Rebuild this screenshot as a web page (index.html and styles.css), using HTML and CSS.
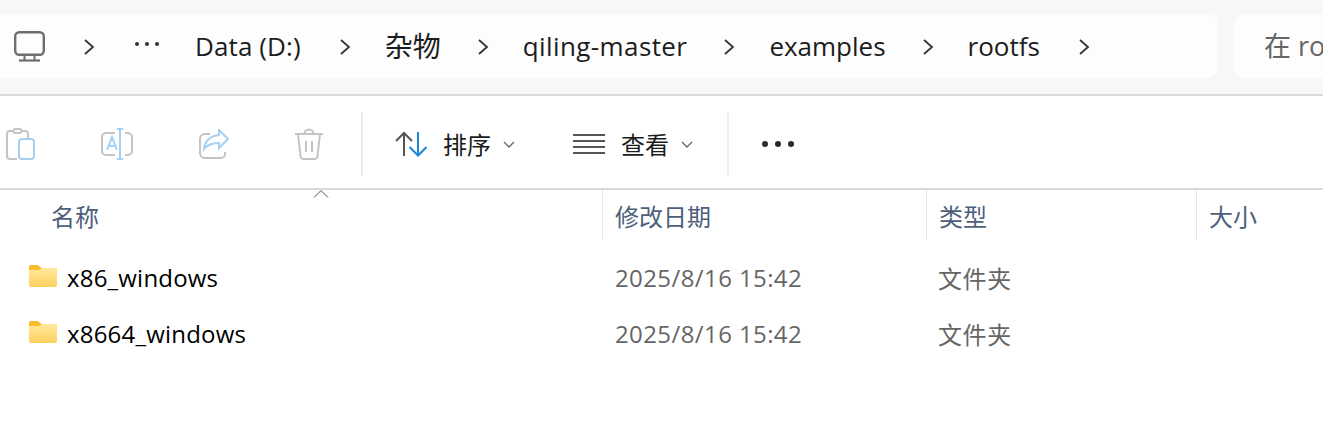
FILE: index.html
```html
<!DOCTYPE html>
<html lang="zh-CN">
<head>
    <meta charset="UTF-8">
    <meta name="viewport" content="width=device-width, initial-scale=1.0">
    <title>rootfs</title>
    <link rel="stylesheet" href="styles.css">
</head>
<body>
    <!-- Address bar -->
    <div class="address-row">
        <div class="address-box">
            <svg class="pc-icon" width="32" height="32" viewBox="0 0 32 32" fill="none" stroke="#6e6e6e" stroke-width="2.4">
                <rect x="1.2" y="1.2" width="28.6" height="22.6" rx="4"/>
                <path d="M10.5 24v5M20.5 24v5" stroke-width="2"/>
                <path d="M5 29.5h21" stroke-width="2.2"/>
            </svg>
            <svg class="crumb-chevron first" width="12" height="16" viewBox="0 0 12 16" fill="none" stroke="#333" stroke-width="1.8"><path d="M2 1l8 7-8 7"/></svg>
            <span class="crumb-dots"><i></i><i></i><i></i></span>
            <span class="crumb drive">Data (D:)</span>
            <svg class="crumb-chevron" width="12" height="16" viewBox="0 0 12 16" fill="none" stroke="#333" stroke-width="1.8"><path d="M2 1l8 7-8 7"/></svg>
            <span class="crumb cjk">杂物</span>
            <svg class="crumb-chevron" width="12" height="16" viewBox="0 0 12 16" fill="none" stroke="#333" stroke-width="1.8"><path d="M2 1l8 7-8 7"/></svg>
            <span class="crumb wide">qiling-master</span>
            <svg class="crumb-chevron" width="12" height="16" viewBox="0 0 12 16" fill="none" stroke="#333" stroke-width="1.8"><path d="M2 1l8 7-8 7"/></svg>
            <span class="crumb">examples</span>
            <svg class="crumb-chevron" width="12" height="16" viewBox="0 0 12 16" fill="none" stroke="#333" stroke-width="1.8"><path d="M2 1l8 7-8 7"/></svg>
            <span class="crumb last">rootfs</span>
            <svg class="crumb-chevron" width="12" height="16" viewBox="0 0 12 16" fill="none" stroke="#333" stroke-width="1.8"><path d="M2 1l8 7-8 7"/></svg>
        </div>
        <div class="search-box">在 ro</div>
    </div>

    <!-- Command bar -->
    <div class="toolbar">
        <svg class="tool-paste" width="30" height="32" viewBox="0 0 30 32" fill="none" stroke-width="2">
            <path d="M8 3H4a3 3 0 0 0-3 3v22a3 3 0 0 0 3 3h7M22 11V6a3 3 0 0 0-3-3h-4" stroke="#c4c4c4"/>
            <rect x="7.500" y="1" width="8" height="4" rx="2" stroke="#c4c4c4"/>
            <rect x="13" y="11" width="15" height="20" rx="3" stroke="#a6d0f2"/>
        </svg>
        <svg class="tool-rename" width="32" height="32" viewBox="0 0 32 32" fill="none" stroke-width="2">
            <path d="M14 5H5a4 4 0 0 0-4 4v14a4 4 0 0 0 4 4h9M24 5h3a4 4 0 0 1 4 4v14a4 4 0 0 1-4 4h-3" stroke="#c4c4c4"/>
            <path d="M16 1h6M19 1v30M16 31h6" stroke="#a6d0f2"/>
            <path d="M6 22l5-13 5 13M7.800 18h6.400" stroke="#a6d0f2"/>
        </svg>
        <svg class="tool-share" width="30" height="30" viewBox="0 0 30 30" fill="none" stroke-width="2">
            <path d="M11 5H6a5 5 0 0 0-5 5v14a5 5 0 0 0 5 5h16a4 4 0 0 0 4-4v-2" stroke="#c4c4c4"/>
            <path d="M20 1l9 9-9 9v-5c-6 0-11 1-15 6 1-8 6-13 15-14V1z" stroke="#a6d0f2"/>
        </svg>
        <svg class="tool-delete" width="28" height="32" viewBox="0 0 28 32" fill="none" stroke="#c4c4c4" stroke-width="2">
            <path d="M0 6h28M9.500 6a4.500 4.500 0 0 1 9 0"/>
            <path d="M3 6l2.500 22a3 3 0 0 0 3 3h11a3 3 0 0 0 3-3L25 6"/>
            <path d="M11 13v11M17 13v11"/>
        </svg>
        <div class="tool-sep"></div>
        <button class="tool-btn sort-btn">
            <svg width="32" height="26" viewBox="0 0 32 26" fill="none" stroke-width="2">
                <path d="M9 25V2M1 10l8-8 8 8" stroke="#555"/>
                <path d="M23 1v23M14.500 16l8.500 8.500L31.500 16" stroke="#1a86d8"/>
            </svg>
            <span>排序</span>
            <svg class="caret" width="12" height="7" viewBox="0 0 12 7" fill="none" stroke="#666" stroke-width="1.300"><path d="M1 1l5 5 5-5"/></svg>
        </button>
        <button class="tool-btn view-btn">
            <svg width="32" height="20" viewBox="0 0 32 20" fill="none" stroke="#555" stroke-width="2"><path d="M0 1h32M0 7h32M0 13h32M0 19h32"/></svg>
            <span>查看</span>
            <svg class="caret" width="12" height="7" viewBox="0 0 12 7" fill="none" stroke="#666" stroke-width="1.300"><path d="M1 1l5 5 5-5"/></svg>
        </button>
        <div class="tool-sep second"></div>
        <span class="more-dots"><i></i><i></i><i></i></span>
    </div>

    <!-- File list -->
    <div class="file-list">
        <svg class="sort-arrow" width="16" height="8" viewBox="0 0 16 8" fill="none" stroke="#555" stroke-width="1"><path d="M1 7.500l7-7 7 7"/></svg>
        <div class="list-header">
            <div class="col-head name-head">名称</div>
            <div class="col-head">修改日期</div>
            <div class="col-head">类型</div>
            <div class="col-head">大小</div>
        </div>
        <div class="file-row">
            <div class="file-name">
                <svg class="folder" width="28" height="22" viewBox="0 0 28 22">
                    <path d="M0 2a2 2 0 0 1 2-2h6.500l4 3H26a2 2 0 0 1 2 2v6H0z" fill="#fbb92c"/>
                    <path d="M0 5h10.500l3-2H26a2 2 0 0 1 2 2v15a2 2 0 0 1-2 2H2a2 2 0 0 1-2-2z" fill="url(#folderFill)"/>
                    <defs><linearGradient id="folderFill" x1="0" y1="0" x2="0" y2="1"><stop offset="0" stop-color="#ffe89a"/><stop offset="1" stop-color="#fcd15f"/></linearGradient></defs>
                </svg>
                <span>x86_windows</span>
            </div>
            <div class="file-cell date-cell">2025/8/16 15:42</div>
            <div class="file-cell type-cell">文件夹</div>
            <div class="file-cell"></div>
        </div>
        <div class="file-row">
            <div class="file-name">
                <svg class="folder" width="28" height="22" viewBox="0 0 28 22">
                    <path d="M0 2a2 2 0 0 1 2-2h6.500l4 3H26a2 2 0 0 1 2 2v6H0z" fill="#fbb92c"/>
                    <path d="M0 5h10.500l3-2H26a2 2 0 0 1 2 2v15a2 2 0 0 1-2 2H2a2 2 0 0 1-2-2z" fill="url(#folderFill)"/>
                </svg>
                <span>x8664_windows</span>
            </div>
            <div class="file-cell date-cell">2025/8/16 15:42</div>
            <div class="file-cell type-cell">文件夹</div>
            <div class="file-cell"></div>
        </div>
    </div>
</body>
</html>
```

FILE: styles.css
```css
:root {
    --text-color: #1c1c1c;
    --muted-color: #666666;
    --head-color: #4c607a;
    --line-color: #d9d9d9;
    --cjk-stack: "Open Sans", "Noto Sans CJK SC", sans-serif;
}

html, body {
    margin: 0;
    padding: 0;
    overflow: hidden;
}

body {
    width: 1323px;
    height: 426px;
    background-color: #ffffff;
    font-family: var(--cjk-stack);
    color: var(--text-color);
    font-size: 24px;
}

/* Address bar */
.address-row {
    display: flex;
    gap: 16px;
    height: 96px;
    padding: 14px 0 16px;
    box-sizing: border-box;
    background-color: #f7f7f7;
    border-bottom: 2px solid var(--line-color);
}

.address-box {
    width: 1218px;
    height: 64px;
    flex: none;
    display: flex;
    align-items: center;
    background-color: #fdfdfd;
    border-radius: 0 10px 10px 0;
    padding-left: 14px;
    box-sizing: border-box;
    gap: 35px;
    font-size: 26px;
}

.pc-icon {
    flex: none;
    margin-top: 2px;
}

.crumb-chevron {
    flex: none;
    margin: 1px -1px 0 1px;
}

.crumb-chevron.first {
    margin: 1px 0 0 2px;
}

.crumb-dots {
    display: flex;
    gap: 6px;
    margin: -4px 1px 0 5px;
}

.crumb-dots i {
    width: 4px;
    height: 4px;
    border-radius: 50%;
    background-color: #333333;
}

.crumb {
    white-space: nowrap;
    line-height: 32px;
}

.crumb.drive {
    margin-right: 2px;
    letter-spacing: 0.1px;
}

.crumb.cjk {
    font-size: 28px;
}

.crumb.wide {
    letter-spacing: 0.4px;
}

.crumb.last {
    margin-right: 2px;
}

.search-box {
    flex: 1;
    height: 64px;
    line-height: 64px;
    padding-left: 30px;
    background-color: #fdfdfd;
    border-radius: 10px 0 0 10px;
    color: var(--muted-color);
    font-size: 27px;
    overflow: hidden;
    white-space: nowrap;
}

/* Command bar */
.toolbar {
    display: flex;
    align-items: center;
    height: 92px;
    padding: 4px 0 0 6px;
    box-sizing: border-box;
}

.tool-paste { margin-right: 65px; }
.tool-rename { margin-right: 66px; }
.tool-share { margin-right: 66px; }
.tool-delete { margin-right: 38px; }

.tool-sep {
    width: 2px;
    height: 64px;
    background-color: #ececec;
    margin-right: 32px;
}

.tool-sep.second {
    margin: 0 33px 0 34px;
}

.tool-btn {
    display: flex;
    align-items: center;
    gap: 16px;
    padding: 0;
    border: none;
    background: transparent;
    font-family: var(--cjk-stack);
    font-size: 24px;
    color: var(--text-color);
}

.tool-btn span {
    margin-top: -2px;
}

.sort-btn { margin-right: 58px; }

.tool-btn .caret {
    margin-left: -4px;
}

.more-dots {
    display: flex;
    gap: 7px;
}

.more-dots i {
    width: 6px;
    height: 6px;
    border-radius: 50%;
    background-color: #2b2b2b;
}

/* File list */
.file-list {
    position: relative;
    border-top: 2px solid var(--line-color);
}

.sort-arrow {
    position: absolute;
    left: 313px;
    top: 0;
}

.list-header,
.file-row {
    display: grid;
    grid-template-columns: 602px 324px 270px 1fr;
}

.list-header {
    height: 50px;
    margin-bottom: 9px;
}

.col-head {
    font-size: 24px;
    line-height: 46px;
    padding: 4px 0 0 12px;
    box-sizing: border-box;
    color: var(--head-color);
    border-left: 1px solid #e6e6e6;
}

.col-head.name-head {
    padding-left: 51px;
    border-left: none;
}

.file-row {
    height: 56px;
    align-items: center;
}

.file-name {
    display: flex;
    align-items: center;
    gap: 10px;
    padding-left: 29px;
    color: #000000;
    letter-spacing: 0.2px;
}

.folder {
    flex: none;
    margin-top: -2px;
}

.file-cell {
    padding-left: 12px;
    color: var(--muted-color);
}

.date-cell {
    padding-left: 13px;
    letter-spacing: 0.4px;
}

.type-cell {
    letter-spacing: 0.6px;
}
```
